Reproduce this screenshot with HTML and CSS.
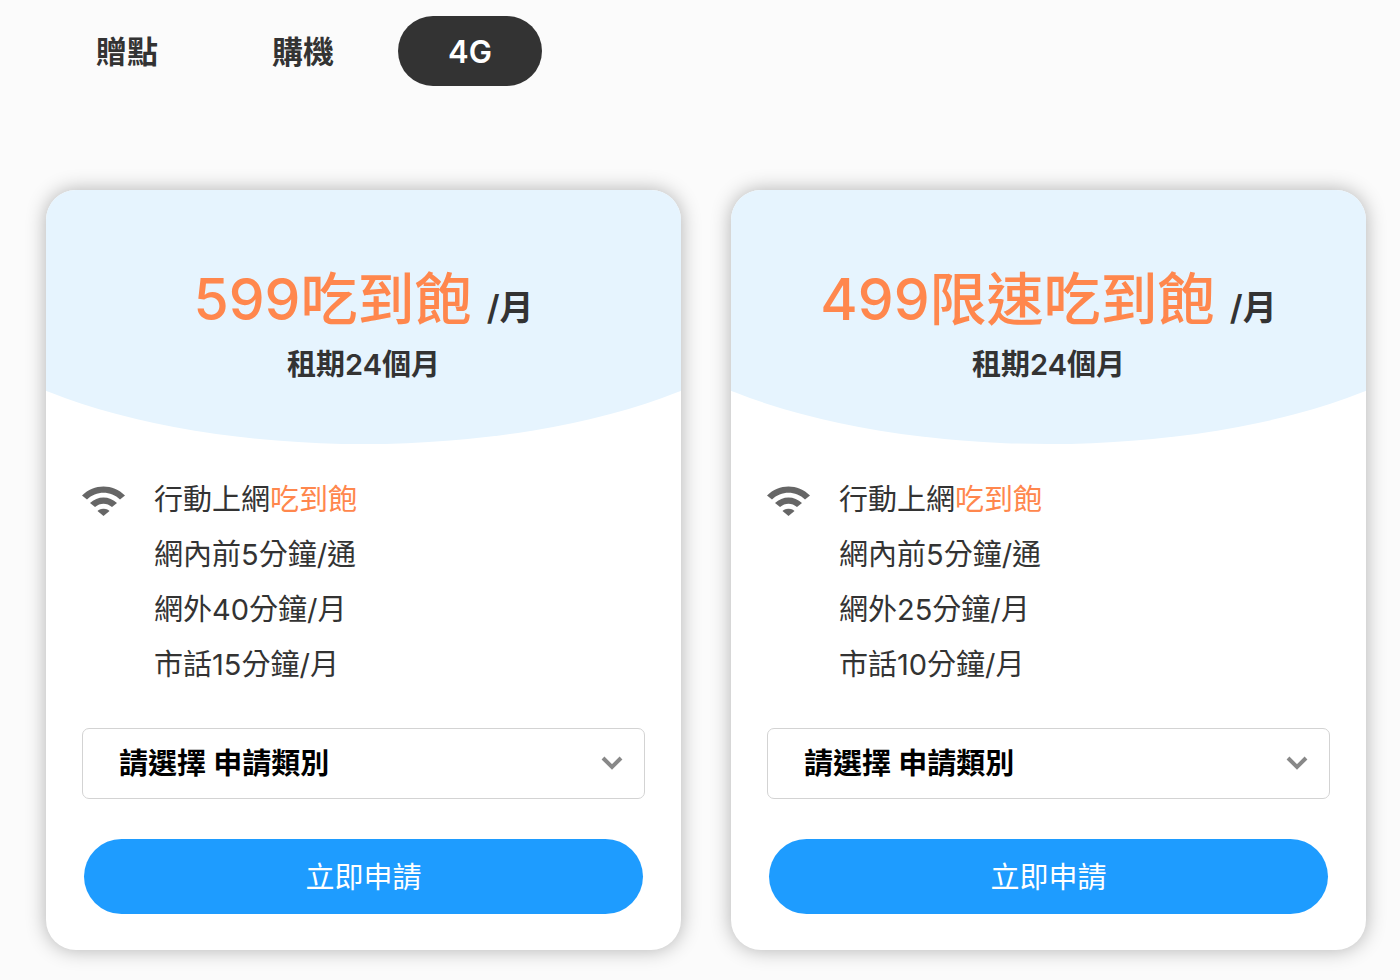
FILE: index.html
```
<!DOCTYPE html>
<html lang="zh-Hant">
<head>
  <meta charset="UTF-8">
  <meta name="viewport" content="width=device-width, initial-scale=1">
  <title>4G 資費方案</title>
  <link rel="stylesheet" href="styles.css">
</head>
<body>
  <nav class="tabs">
    <button type="button" class="tab">贈點</button>
    <button type="button" class="tab">購機</button>
    <button type="button" class="tab active">4G</button>
  </nav>

  <main class="plans">
    <section class="card">
      <header class="card-header">
        <h2 class="price">599吃到飽 <span class="unit">/月</span></h2>
        <p class="term">租期24個月</p>
      </header>
      <div class="card-body">
        <div class="features">
          <svg class="wifi" viewBox="0 0 44 32" aria-hidden="true">
            <path d="M0 10.500C12-1.500 31-1.500 43 10.500L38 14.500C29 5.500 14 5.500 5 14.500Z"/>
            <path d="M8 18C15.500 10.500 27.500 10.500 35 18L30 22C25 17.500 18 17.500 13 22Z"/>
            <path d="M15.500 26C18.500 23 24.500 23 27.500 26L21.500 31Z"/>
          </svg>
          <ul class="feature-list">
            <li>行動上網<span class="highlight">吃到飽</span></li>
            <li>網內前5分鐘/通</li>
            <li>網外40分鐘/月</li>
            <li>市話15分鐘/月</li>
          </ul>
        </div>
        <div class="select-box">
          <select aria-label="申請類別">
            <option>請選擇 申請類別</option>
          </select>
          <svg class="arrow" viewBox="0 0 22 14" aria-hidden="true"><path d="M2 2L11 11L20 2"/></svg>
        </div>
        <button type="button" class="apply">立即申請</button>
      </div>
    </section>

    <section class="card">
      <header class="card-header">
        <h2 class="price">499限速吃到飽 <span class="unit">/月</span></h2>
        <p class="term">租期24個月</p>
      </header>
      <div class="card-body">
        <div class="features">
          <svg class="wifi" viewBox="0 0 44 32" aria-hidden="true">
            <path d="M0 10.500C12-1.500 31-1.500 43 10.500L38 14.500C29 5.500 14 5.500 5 14.500Z"/>
            <path d="M8 18C15.500 10.500 27.500 10.500 35 18L30 22C25 17.500 18 17.500 13 22Z"/>
            <path d="M15.500 26C18.500 23 24.500 23 27.500 26L21.500 31Z"/>
          </svg>
          <ul class="feature-list">
            <li>行動上網<span class="highlight">吃到飽</span></li>
            <li>網內前5分鐘/通</li>
            <li>網外25分鐘/月</li>
            <li>市話10分鐘/月</li>
          </ul>
        </div>
        <div class="select-box">
          <select aria-label="申請類別">
            <option>請選擇 申請類別</option>
          </select>
          <svg class="arrow" viewBox="0 0 22 14" aria-hidden="true"><path d="M2 2L11 11L20 2"/></svg>
        </div>
        <button type="button" class="apply">立即申請</button>
      </div>
    </section>
  </main>
</body>
</html>
```
FILE: styles.css
```
* {
  box-sizing: border-box;
}
body {
  margin: 0;
  padding: 16px 34px 30px 46px;
  background-color: #fbfbfb;
  color: #333;
  font-family: Inter, "Noto Sans CJK TC", sans-serif;
  font-size: 29px;
}
button, select {
  font-family: inherit;
}
h2, p, ul {
  margin: 0;
  padding: 0;
}

/* tabs */
.tabs {
  display: flex;
  gap: 14px;
  margin-bottom: 104px;
}
.tab {
  height: 70px;
  padding: 0 50px 4px;
  border: none;
  border-radius: 35px;
  background: none;
  color: #333;
  font-size: 31px;
  font-weight: 600;
  cursor: pointer;
}
.tab.active {
  padding-bottom: 0;
  background: #333;
  color: white;
}

/* plan cards */
.plans {
  display: grid;
  grid-template-columns: 1fr 1fr;
  gap: 50px;
}
.card {
  overflow: hidden;
  border-radius: 30px;
  background: white;
  box-shadow: 0 0 20px rgba(0,0,0,0.3);
}
/* wider than the card, so only the shallow part of the curve shows */
.card-header {
  height: 254px;
  margin: 0 -20%;
  padding-top: 70px;
  border-radius: 0 0 50% 50% / 0 0 70% 70%;
  background: #e6f4fe;
  text-align: center;
}
.price {
  color: #ff874d;
  font-size: 57px;
  font-weight: 500;
  line-height: 80px;
}
.unit {
  color: #333;
  font-size: 34px;
  font-weight: 600;
}
.term {
  font-weight: 600;
  line-height: 34px;
}
.card-body {
  padding: 28px 36px 36px;
}
.features {
  display: flex;
  gap: 28px;
  margin-bottom: 36px;
}
.wifi {
  width: 44px;
  height: 32px;
  margin-top: 13px;
  fill: #666;
}
.feature-list {
  list-style: none;
  line-height: 55px;
}
.highlight {
  color: #ff874d;
}
.select-box {
  position: relative;
  margin-bottom: 40px;
}
.select-box select {
  display: block;
  width: 100%;
  height: 71px;
  padding: 0 72px 0 36px;
  border: 1px solid #d3d3d3;
  border-radius: 7px;
  background: white;
  color: black;
  font-size: 29px;
  font-weight: 600;
  appearance: none;
}
.arrow {
  position: absolute;
  top: 28px;
  right: 22px;
  width: 22px;
  height: 14px;
  fill: none;
  stroke: #888;
  stroke-width: 4;
  pointer-events: none;
}
.apply {
  display: block;
  width: calc(100% - 4px);
  height: 75px;
  margin: 0 auto;
  padding: 0 0 4px;
  border: none;
  border-radius: 38px;
  background: #1e9cff;
  color: white;
  font-size: 29px;
  cursor: pointer;
}
```
